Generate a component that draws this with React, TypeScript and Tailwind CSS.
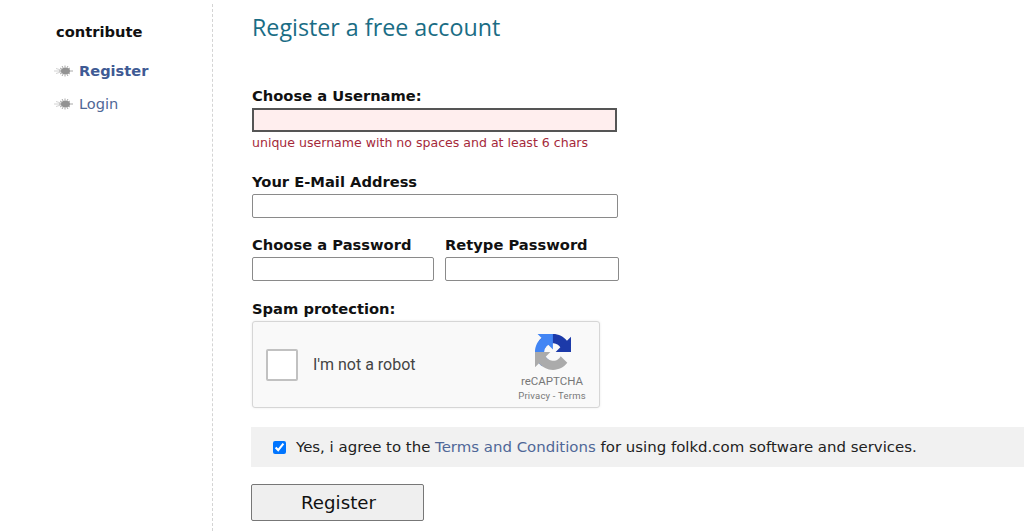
import React from 'react';

function Bullet() {
  return (
    <svg width="20" height="14" viewBox="0 0 20 14" className="shrink-0 blur-[0.7px]">
      <path d="M0 7h7M2 4.500l5 1.500M2 9.500l5-1.500" stroke="#d2d2d2" strokeWidth="1" />
      <path d="M11 1.500v11M8 2l6 10M14 2l-6 10M6 4l10 6M16 4L6 10M5 7h14" stroke="#a8a8a8" strokeWidth="1" />
      <ellipse cx="11.500" cy="7" rx="4.500" ry="3.200" fill="#939393" />
    </svg>
  );
}

function Label({ children }: { children: React.ReactNode }) {
  return <label className="block text-[14.700px] leading-[18px] font-bold text-[#111]">{children}</label>;
}

function TextBox({ className = '' }: { className?: string }) {
  return <input type="text" className={`block h-6 rounded-[2px] border border-[#8a8a8a] bg-white ${className}`} />;
}

function RecaptchaLogo() {
  return (
    <svg width="36" height="36" viewBox="0 0 64 64" className="ml-[2px]">
      <path
        d="M64 31.955l-.033-1.37V4.687l-7.16 7.16C50.948 4.674 42.033.093 32.05.093c-10.4 0-19.622 4.96-25.458 12.64l11.736 11.86a15.55 15.55 0 0 1 4.754-5.334c2.05-1.6 4.952-2.906 8.968-2.906.485 0 .86.057 1.135.163 4.976.393 9.288 3.14 11.828 7.124l-8.307 8.307 26.2.001"
        fill="#1c3aa9"
      />
      <path
        d="M31.862.094l-1.37.033H4.594l7.16 7.16C4.58 13.147 0 22.06 0 32.046c0 10.4 4.96 19.622 12.64 25.458l11.86-11.736a15.55 15.55 0 0 1-5.334-4.754c-1.6-2.05-2.906-4.952-2.906-8.968 0-.485.057-.86.163-1.135.393-4.976 3.14-9.288 7.124-11.828l8.307 8.307.001-26.2"
        fill="#4285f4"
      />
      <path
        d="M.001 32.045l.033 1.37v25.898l7.16-7.160c5.860 7.173 14.774 11.754 24.760 11.754 10.400 0 19.622-4.960 25.458-12.640L45.676 39.410a15.550 15.550 0 0 1-4.754 5.334c-2.050 1.600-4.952 2.906-8.968 2.906-.485 0-.860-.057-1.135-.163-4.976-.393-9.288-3.140-11.828-7.124l8.307-8.307-26.200-.001"
        fill="#ababab"
      />
    </svg>
  );
}

export default function App() {
  return (
    <div className="flex h-[531px] w-[1024px] overflow-hidden bg-white font-['DejaVu_Sans',sans-serif]">
      {/* Sidebar */}
      <aside className="mt-1 w-[213px] shrink-0 border-r border-dashed border-[#d4d4d4] pt-[19px] pl-[54px]">
        <h3 className="pl-[2px] text-[14.700px] leading-[18px] font-bold text-[#111]">contribute</h3>
        <ul className="mt-[17px] space-y-[7px] text-[14.600px] leading-[26px] text-[#4f6797]">
          <li className="flex items-center gap-[5px] font-bold text-[#3f5a94]">
            <Bullet />
            Register
          </li>
          <li className="flex items-center gap-[5px]">
            <Bullet />
            Login
          </li>
        </ul>
      </aside>

      {/* Main form */}
      <main className="min-w-0 flex-1 pl-[39px]">
        <h1 className="mt-[12px] font-['Open_Sans',sans-serif] text-[23.250px] leading-[30px] text-[#1a6d85]">Register a free account</h1>

        <div className="mt-[45px]">
          <Label>Choose a Username:</Label>
          <input type="text" className="mt-[3px] block h-6 w-[365px] border-2 border-[#555] bg-[#ffeeee]" />
          <p className="mt-[2px] text-[12.550px] leading-[18px] text-[#a5293a]">unique username with no spaces and at least 6 chars</p>
        </div>

        <div className="mt-[21px]">
          <Label>Your E-Mail Address</Label>
          <TextBox className="mt-[3px] w-[366px]" />
        </div>

        <div className="mt-[18px] flex gap-[11px]">
          <div>
            <Label>Choose a Password</Label>
            <TextBox className="mt-[3px] w-[182px]" />
          </div>
          <div>
            <Label>Retype Password</Label>
            <TextBox className="mt-[3px] w-[174px]" />
          </div>
        </div>

        <div className="mt-[19px]">
          <Label>Spam protection:</Label>
          <div className="mt-[3px] flex h-[87px] w-[348px] items-center rounded-[3px] border border-[#d6d6d6] bg-[#f9f9f9] pl-[13px] font-['Roboto',sans-serif] shadow-[0_0_3px_rgba(0,0,0,0.08)]">
            <div className="h-[32px] w-[32px] rounded-[2px] border-2 border-[#c1c1c1] bg-white" />
            <span className="ml-[15px] text-[16px] text-[#444]">I'm not a robot</span>
            <div className="ml-auto flex w-[94px] flex-col items-center pt-[6px] text-[#777]">
              <RecaptchaLogo />
              <span className="mt-[4px] text-[11.500px] leading-[14px]">reCAPTCHA</span>
              <span className="mt-[2px] text-[9.500px] leading-[12px] tracking-[0.2px]">Privacy - Terms</span>
            </div>
          </div>
        </div>

        <div className="mt-[19px] -ml-px flex h-[40px] items-center bg-[#f1f1f1] pl-[22px] text-[14.950px] text-[#222]">
          <input type="checkbox" defaultChecked className="h-[13px] w-[13px] accent-[#0075ff]" />
          <span className="ml-[10px]">
            Yes, i agree to the <a className="text-[#4f6797]">Terms and Conditions</a> for using folkd.com software and services.
          </span>
        </div>

        <button className="mt-[17px] -ml-px block h-[37px] w-[173px] rounded-[2px] border border-[#777] bg-[#efefef] pl-[2px] text-[18.200px] text-[#111]">
          Register
        </button>
      </main>
    </div>
  );
}
